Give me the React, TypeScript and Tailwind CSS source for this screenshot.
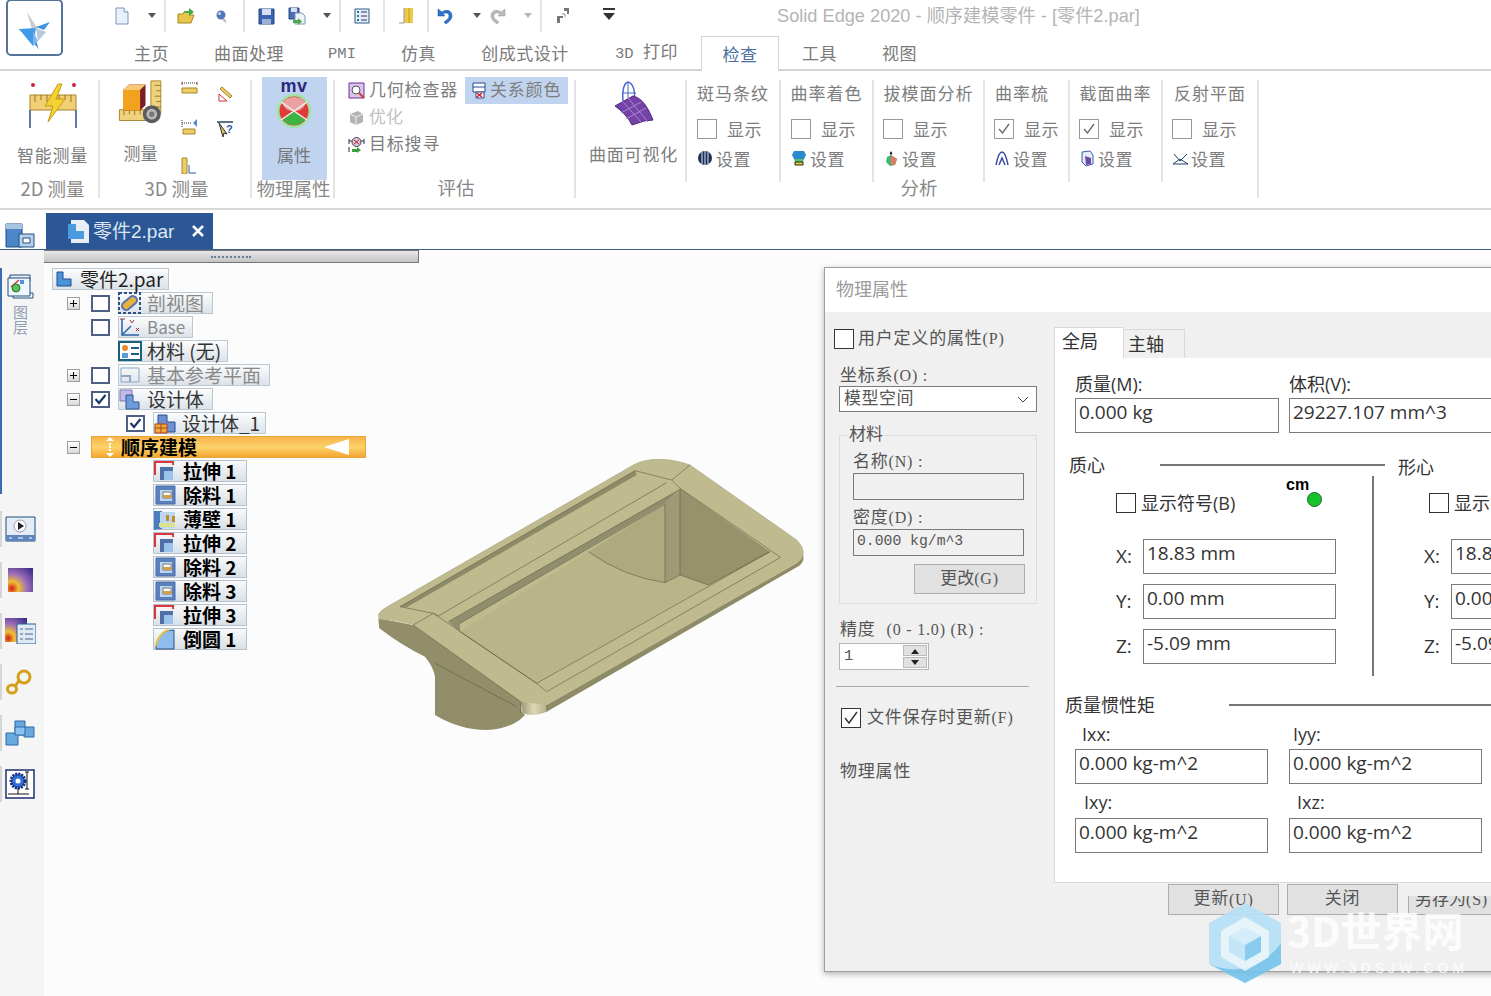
import {FC, ReactNode} from 'react';

const Sep: FC<{className?: string}> = ({className = 'h-[118px] mt-[9px]'}) => (
  <div className={`w-[2px] bg-[#e3e3e3] shrink-0 ${className}`} />
);

const Drop = () => (
  <svg width="10" height="6" viewBox="0 0 10 6" className="shrink-0"><path d="M1 0h8L5 5z" fill="#555" /></svg>
);

// half width latin inside the dialog's cjk labels
const M: FC<{children: ReactNode}> = ({children}) => (
  <span className="font-['Liberation_Serif'] text-[16px] tracking-[0.8px]">{children}</span>
);

// quick access toolbar icons
const NewIcon = () => (
  <svg width="16" height="18" viewBox="0 0 16 18"><path d="M2 1h8l4 4v12H2z" fill="#e8f1fb" stroke="#7c97bd" /><path d="M10 1v4h4" fill="#fff" stroke="#7c97bd" /></svg>
);
const OpenIcon = () => (
  <svg width="18" height="18" viewBox="0 0 18 18"><path d="M1 7h5l1-2h6v3h4l-3 8H1z" fill="#e8c64c" stroke="#a88a20" /><path d="M7 4h5V1l5 4-5 4V6H8z" fill="#45a845" /></svg>
);
const PinIcon = () => (
  <svg width="14" height="14" viewBox="0 0 14 14"><circle cx="7" cy="6" r="4.5" fill="#5577bb" /><circle cx="5.5" cy="4.5" r="1.5" fill="#c8d6f0" /><path d="M9 10l3 3" stroke="#bbb" strokeWidth="2" /></svg>
);
const SaveIcon = () => (
  <svg width="17" height="17" viewBox="0 0 17 17"><path d="M1 1h15v15H1z" fill="#3b63b5" stroke="#24427f" /><path d="M4 1h9v6H4z" fill="#d5e0f2" /><path d="M4 11h9v5H4z" fill="#9bb1d8" /></svg>
);
const SaveAllIcon = () => (
  <svg width="18" height="18" viewBox="0 0 18 18"><path d="M1 1h10v11H1z" fill="#4b6cb0" stroke="#2d4a86" /><path d="M3 1h6v4H3z" fill="#d5e0f2" /><path d="M7 6h7l3 3v8H7z" fill="#eef3fa" stroke="#7c97bd" /><path d="M5 13h5v-2l4 3.500-4 3.500v-2H5z" fill="#4aa84a" /></svg>
);
const ListIcon = () => (
  <svg width="16" height="16" viewBox="0 0 16 16"><path d="M1 1h14v14H1z" fill="#e3eefa" stroke="#2a5a80" /><path d="M3 4h2M3 8h2M3 12h2" stroke="#2a7a8a" strokeWidth="2" /><path d="M7 4h6M7 8h6M7 12h6" stroke="#335" /></svg>
);
const DoorIcon = () => (
  <svg width="18" height="18" viewBox="0 0 18 18"><path d="M7 1h9v15H7z" fill="#eccb4a" /><path d="M7 1v15H2" fill="none" stroke="#999" /><path d="M12 1v15" stroke="#c49c22" /></svg>
);
const UndoIcon = () => (
  <svg width="18" height="18" viewBox="0 0 18 18"><path d="M2 2v7h7L7 7c3-2 6-1 6 2s-3 4-5 6l2 2c4-3 6-5 6-8 0-6-6-7-10-4z" fill="#2f74c9" stroke="#1c4f96" strokeWidth=".5" /></svg>
);
const RedoIcon = () => (
  <svg width="18" height="18" viewBox="0 0 18 18"><path d="M16 2v7H9l2-2C8 5 5 6 5 9s3 4 5 6l-2 2C4 14 2 12 2 9c0-6 6-7 10-4z" fill="#b9b9b9" stroke="#999" strokeWidth=".5" /></svg>
);
const SwapIcon = () => (
  <svg width="16" height="18" viewBox="0 0 16 18"><path d="M9 1h5v6h-2V4h-3zM2 9h6v2H5v5H2z" fill="#777" /><path d="M7 7h3v3" fill="none" stroke="#999" /></svg>
);
const CustomizeIcon = () => (
  <svg width="14" height="14" viewBox="0 0 14 14"><path d="M1 1h12v2H1z" fill="#333" /><path d="M1 6h12l-6 7z" fill="#333" /></svg>
);

const AppLogo = () => (
  <div className="w-[57px] h-[57px] -mt-[1px] ml-[6px] rounded-[5px] border-2 border-[#54749a] bg-white flex items-center justify-center shrink-0">
    <svg width="42" height="42" viewBox="0 0 42 42">
      <path d="M13 5l9 14 6 1-10 3z" fill="#c9ccd2" />
      <path d="M5 22l14 2 6 19-2-3z" fill="#3b8fe0" />
      <path d="M5 22l17-1-3 18z" fill="#3f9aea" />
      <path d="M22 20l14-5-6 8z" fill="#3f94de" />
      <path d="M22 21l10 4-8 9z" fill="#b8c8dc" />
      <path d="M19 24l5 10-5 5z" fill="#7db6ea" />
    </svg>
  </div>
);

const SmartMeasureIcon = () => (
  <svg width="50" height="48" viewBox="0 0 50 48">
    <circle cx="5" cy="3" r="2" fill="#c8283c" /><circle cx="46" cy="3" r="2" fill="#c8283c" />
    <path d="M2 13h46v15H2z" fill="#f1cf74" stroke="#a88526" />
    <path d="M7 13v7M13 13v5M19 13v7M31 13v7M37 13v5M43 13v7" stroke="#8f7426" />
    <path d="M30 2L17 24h8l-5 16 17-23h-9l6-15z" fill="#f4d233" stroke="#c79a17" />
    <path d="M2 28v18M48 28v18" stroke="#2b4d8c" strokeWidth="1.500" />
  </svg>
);
const Measure3DIcon = () => (
  <svg width="50" height="50" viewBox="0 0 50 50">
    <path d="M36 1h11v36H36z" fill="#f0d27e" stroke="#a08028" />
    <path d="M40 6h7M42 12h5M40 18h7M42 24h5M40 30h7" stroke="#8f7426" />
    <path d="M1 33h38v12H1z" fill="#f0d27e" stroke="#a08028" />
    <path d="M6 33v6M12 33v5M18 33v6M24 33v5" stroke="#8f7426" />
    <path d="M5 11l7-6h18v23l-6 6H5z" fill="#7a1f28" />
    <path d="M5 11h19v23H5z" fill="#f2a21e" />
    <path d="M5 11l7-6h18l-6 6z" fill="#f7c977" />
    <circle cx="37" cy="38" r="10" fill="#5c5c5c" /><circle cx="37" cy="38" r="6" fill="#b9b9b9" /><circle cx="37" cy="38" r="3" fill="#777" />
  </svg>
);
const MvIcon = () => (
  <div className="flex flex-col items-center leading-none">
    <span className="font-['Liberation_Sans'] font-bold text-[18px] leading-[14px] text-[#2a2a7a] tracking-[0.5px]">mv</span>
    <svg width="36" height="34" viewBox="0 0 36 34" className="mt-[1px]">
      <circle cx="18" cy="17" r="17" fill="#9ee39e" />
      <circle cx="18" cy="17" r="14.500" fill="#df3b3b" />
      <path d="M6 9c4 8 8 8 12 8s8 0 12-8c-3-4-7-6-12-6S9 5 6 9z" fill="#f0e6e6" opacity=".6" />
      <path d="M18 17L7 26c3 3 7 5 11 5s8-2 11-5z" fill="#3db544" />
      <path d="M5 8l26 18M31 8L5 26" stroke="#f4f0f0" strokeWidth="1.500" />
    </svg>
  </div>
);
const SurfaceIcon = () => (
  <svg width="44" height="46" viewBox="0 0 44 46">
    <path d="M13 28C8 12 12 2 16 1c5 1 8 10 6 18" fill="none" stroke="#4b64cf" strokeWidth="1.500" />
    <path d="M16 1v19M10 12h14" stroke="#4b64cf" />
    <path d="M3 25l18-10c10 2 16 14 20 24l-9 1L20 44C16 36 10 30 3 25z" fill="#7442a8" stroke="#4c2778" />
    <path d="M10 20l20 22M16 17l20 24M9 32l20-11M14 38l20-11" stroke="#ad8ad0" />
  </svg>
);

const SmallIcon: FC<{kind: string}> = ({kind}) => {
  const paths: Record<string, ReactNode> = {
    dist: <><path d="M1 3v3M16 3v3" stroke="#c33" /><path d="M1 4h15" stroke="#333" strokeDasharray="1 1" /><path d="M1 9h15v5H1z" fill="#eccd69" stroke="#a88526" /></>,
    slope: <><path d="M3 15V8l8 7z" fill="none" stroke="#c33" /><path d="M4 3l2-2 10 9-2 2z" fill="#eccd69" stroke="#a88526" /></>,
    minDist: <><path d="M1 2v7M1 5h9" stroke="#333" strokeDasharray="1 1" /><path d="M12 5l4-4v8z" fill="#5588cc" /><path d="M2 11h12v5H2z" fill="#eccd69" stroke="#a88526" /></>,
    query: <><path d="M1 2h16" stroke="#246" strokeWidth="1.500" /><path d="M3 3l8 11-3-1-1 4z" fill="#d8c25a" stroke="#333" /><text x="10" y="13" fontSize="11" fontWeight="700" fill="#2a5aa8" fontFamily="Liberation Sans">?</text></>,
    angle: <><path d="M1 1h5v16H1z" fill="#eccd69" stroke="#a88526" /><path d="M8 8v8h7" fill="none" stroke="#2a5aa8" /></>,
    geom: <><path d="M1 1h15v15H1z" fill="#d9c4e8" stroke="#6a2f9a" /><circle cx="8" cy="8" r="4" fill="#fff" stroke="#556" /><path d="M11 11l5 5" stroke="#c43" strokeWidth="2" /></>,
    rel: <><path d="M2 1h12v9H2z" fill="#fff" stroke="#2a4a90" /><path d="M2 5h12" stroke="#2a4a90" /><path d="M5 10h8v6H5z" fill="#fff" stroke="#2a4a90" /><path d="M6 11l5 4M11 11l-5 4" stroke="#d11" strokeWidth="1.500" /></>,
    opt: <><path d="M2 5l8-3 5 3v8l-7 3-6-3z" fill="#b4b4b4" /><path d="M8 8l7-3M8 8v8M8 8L2 5" stroke="#eee" /></>,
    goal: <><path d="M1 3v5M16 3v5M1 5h3M13 5h3M1 11v5" stroke="#234" /><circle cx="8.500" cy="6" r="4.500" fill="#d7c8dc" stroke="#445" /><path d="M6 4l5 4M11 4l-5 4" stroke="#c22" /><path d="M4 13h5v-2l4 3-4 3v-1H4z" fill="#3ca03c" /></>,
    zebra: <><circle cx="8" cy="8" r="7" fill="#1d2f55" /><path d="M5 2v12M8 1v14M11 2v12" stroke="#dfe6f2" /></>,
    curv: <><path d="M3 1h10l2 4-2 4H3L1 5z" fill="#2a8ad0" /><path d="M3 9h10l-1 3H4z" fill="#5cc070" /><path d="M4 12h8v3H4z" fill="#e6cf3a" stroke="#222" /></>,
    draft: <><path d="M8 2v4" stroke="#222" /><path d="M8 5l6 4-2 6-5 1-4-4 1-5z" fill="#44b86a" /><path d="M8 5l6 4-2 6-4 0z" fill="#e07b6a" /><path d="M8 1l-1.500 3h3z" fill="#222" /></>,
    comb: <><path d="M2 15C4 5 6 2 8 2s4 3 6 13M5 15l3-7 3 7" fill="none" stroke="#3a4ea8" strokeWidth="1.500" /></>,
    section: <><path d="M3 2l8-1 3 4v9l-7 2-4-4z" fill="#e6ecf7" stroke="#3a5aa8" /><path d="M6 6l6 2v6l-5 1z" fill="#6a4aa8" /></>,
    reflect: <><path d="M1 14h15L8 9z" fill="#fff" stroke="#24406e" /><path d="M2 4l6 7 7-7" fill="none" stroke="#24406e" /></>,
  };
  return <svg width="17" height="17" viewBox="0 0 17 17" className="shrink-0">{paths[kind]}</svg>;
};

const Analysis: FC<{title: string; width: string; icon: string; checked?: boolean; pl: string; titleCls?: string}> = ({title, width, icon, checked, pl, titleCls = ''}) => (
  <div className={`${width} h-[104px] flex flex-col items-center`}>
    <div className={`h-[22px] mt-[2px] text-[17px] leading-[22px] whitespace-nowrap tracking-[1px] text-[#7d7d7d] ${titleCls}`}>{title}</div>
    <div className={`w-full ${pl} flex items-center h-[21px] mt-[14px]`}>
      <div className="w-[20px] h-[20px] border border-[#999] bg-white flex items-center justify-center">
        {checked && <svg width="14" height="14" viewBox="0 0 14 14"><path d="M2 7l3.500 4L12 2" fill="none" stroke="#666" strokeWidth="1.300" /></svg>}
      </div>
      <span className="ml-[10px] text-[17px] tracking-[0.5px] text-[#7d7d7d] leading-none pb-[1px] whitespace-nowrap">显示</span>
    </div>
    <div className={`w-full ${pl} flex items-center h-[21px] mt-[9px]`}>
      <SmallIcon kind={icon} />
      <span className="ml-[2px] text-[17px] tracking-[0.5px] text-[#7d7d7d] leading-none pb-[1px] whitespace-nowrap">设置</span>
    </div>
  </div>
);

const GroupLabel: FC<{children: ReactNode}> = ({children}) => (
  <div className="text-[18.500px] leading-[22px] text-[#888] text-center whitespace-nowrap">{children}</div>
);

const Ribbon = () => (
  <div className="h-[139px] border-b-2 border-[#d8d8d8] flex bg-white shrink-0 text-[#7d7d7d]">
    <div className="w-[98px] shrink-0 flex flex-col items-center pl-[7px]">
      <div className="mt-[11px] h-[48px]"><SmartMeasureIcon /></div>
      <div className="mt-[14px] text-[17px] leading-[22px] tracking-[0.8px] whitespace-nowrap">智能测量</div>
      <div className="mt-[11px]"><GroupLabel>2D 测量</GroupLabel></div>
    </div>
    <Sep />
    <div className="w-[150px] shrink-0 flex flex-col">
      <div className="flex h-[93px]">
        <div className="w-[81px] pt-[9px] flex flex-col items-center">
          <Measure3DIcon />
          <div className="mt-[17px] text-[17px] leading-[22px] whitespace-nowrap">测量</div>
        </div>
        <div className="w-[35px] pt-[8px] flex flex-col gap-[22px]"><SmallIcon kind="dist" /><SmallIcon kind="minDist" /><SmallIcon kind="angle" /></div>
        <div className="pt-[15px] flex flex-col gap-[17px]"><SmallIcon kind="slope" /><SmallIcon kind="query" /></div>
      </div>
      <div className="mt-[13px] pl-[3px]"><GroupLabel>3D 测量</GroupLabel></div>
    </div>
    <Sep />
    <div className="w-[81px] shrink-0 flex flex-col items-center relative">
      <div className="mt-[6px] ml-[3px] w-[65px] h-[103px] bg-[#c0d3ef] flex flex-col items-center pt-[2px]">
        <MvIcon />
        <div className="mt-[16px] text-[17px] leading-[22px] text-[#777]">属性</div>
      </div>
      <div className="absolute top-[106px] left-[1px] w-full"><GroupLabel>物理属性</GroupLabel></div>
    </div>
    <Sep />
    <div className="w-[239px] shrink-0 flex flex-col">
      <div className="h-[93px] pl-[13px]">
        <div className="flex items-center h-[27px] mt-[6px]">
          <SmallIcon kind="geom" />
          <span className="ml-[4px] text-[17px] tracking-[0.8px] whitespace-nowrap leading-none pb-[4px]">几何检查器</span>
          <div className="ml-[7px] h-[27px] w-[103px] bg-[#c0d3ef] flex items-center pl-[6px]">
            <SmallIcon kind="rel" />
            <span className="ml-[2px] text-[17px] tracking-[0.8px] whitespace-nowrap leading-none pb-[4px]">关系颜色</span>
          </div>
        </div>
        <div className="flex items-center h-[27px] text-[#c2c2c2]">
          <SmallIcon kind="opt" />
          <span className="ml-[4px] text-[17px] leading-none pb-[4px]">优化</span>
        </div>
        <div className="flex items-center h-[27px]">
          <SmallIcon kind="goal" />
          <span className="ml-[4px] text-[17px] tracking-[0.8px] leading-none pb-[4px]">目标搜寻</span>
        </div>
      </div>
      <div className="mt-[12px] pl-[3px]"><GroupLabel>评估</GroupLabel></div>
    </div>
    <Sep />
    <div className="shrink-0 flex flex-col relative">
      <div className="flex mt-[9px]">
        <div className="w-[109px] flex flex-col items-center pt-[1px] pl-[6px]">
          <SurfaceIcon />
          <div className="mt-[16px] text-[17px] leading-[22px] tracking-[0.8px] whitespace-nowrap">曲面可视化</div>
        </div>
        <Sep className="h-[102px]" />
        <Analysis title="斑马条纹" width="w-[92px]" icon="zebra" pl="pl-[10px]" />
        <Sep className="h-[102px]" />
        <Analysis title="曲率着色" width="w-[91px]" icon="curv" pl="pl-[10px]" />
        <Sep className="h-[102px]" />
        <Analysis title="拔模面分析" width="w-[109px]" icon="draft" pl="pl-[9px]" />
        <Sep className="h-[102px]" />
        <Analysis title="曲率梳" width="w-[83px]" icon="comb" checked pl="pl-[9px]" titleCls="pr-[9px]" />
        <Sep className="h-[102px]" />
        <Analysis title="截面曲率" width="w-[91px]" icon="section" checked pl="pl-[9px]" />
        <Sep className="h-[102px]" />
        <Analysis title="反射平面" width="w-[94px]" icon="reflect" pl="pl-[9px]" />
      </div>
      <div className="absolute top-[105px] left-[343px] w-[0px] flex justify-center"><GroupLabel>分析</GroupLabel></div>
    </div>
    <Sep />
  </div>
);

// tree icons
const Extrude = () => (
  <svg width="22" height="22" viewBox="0 0 22 22"><path d="M1 15V2h18v3" fill="none" stroke="#d8383c" strokeWidth="2" /><path d="M6 7h13v13H6z" fill="#4f6fa8" /><path d="M10 11h9v9h-9z" fill="#9cc3ea" /></svg>
);
const Cut = () => (
  <svg width="22" height="22" viewBox="0 0 22 22"><path d="M2 2h19v18H2z" fill="#5b80bb" stroke="#4a6ca4" /><path d="M6 6h12v11H6z" fill="#b9d5f2" /><path d="M9 8h8v6H9z" fill="#fff" stroke="#777" /><path d="M9 11h8v3H9z" fill="#d4a23a" /></svg>
);
const Thin = () => (
  <svg width="22" height="22" viewBox="0 0 22 22"><path d="M0 3h8v18l-8 1z" fill="#4a7ec0" /><path d="M6 4h15v16H6z" fill="#bcd6ec" /><path d="M5 15h16v4H5z" fill="#d9e38a" /><path d="M12 7h3v6h-3zM18 8h3v6h-3z" fill="#c08a2e" /></svg>
);
const Round = () => (
  <svg width="22" height="22" viewBox="0 0 22 22"><path d="M2 21C2 10 8 2 20 2v19z" fill="#8fbcec" stroke="#2a4f8a" /><path d="M2 18C3 10 9 3 15 2" fill="none" stroke="#e3c34a" strokeWidth="2" /></svg>
);
const ParIcon = () => (
  <svg width="18" height="18" viewBox="0 0 18 18"><path d="M2 2h6v7h8v7H2z" fill="#4a94dc" stroke="#204f8a" /></svg>
);
const SectionIcon = () => (
  <svg width="24" height="22" viewBox="0 0 24 22"><rect x="1" y="1" width="21" height="20" fill="none" stroke="#2c4d86" strokeWidth="2" strokeDasharray="3 2" /><rect x="3" y="7" width="17" height="8" rx="4" transform="rotate(-40 11.500 11)" fill="#e8b23e" stroke="#5574a8" strokeWidth="2" /></svg>
);
const BaseIcon = () => (
  <svg width="22" height="22" viewBox="0 0 22 22"><path d="M3 3v16h17" fill="none" stroke="#2b62a8" strokeWidth="1.500" /><path d="M3 19l9-9" stroke="#2b62a8" strokeWidth="1.500" /><path d="M1 3h5M11 4l2 3 2-3M17 12l3 3M20 12l-3 3" stroke="#a8323c" fill="none" /></svg>
);
const MatIcon = () => (
  <svg width="24" height="20" viewBox="0 0 24 20"><path d="M1 1h22v18H1z" fill="#fff" stroke="#17607e" strokeWidth="2" /><circle cx="7" cy="7" r="3" fill="#e88a2e" /><path d="M4 12h6v5H4z" fill="#5a9ad6" /><path d="M13 7h8M13 13h8" stroke="#17607e" strokeWidth="2" /></svg>
);
const PlaneIcon = () => (
  <svg width="24" height="20" viewBox="0 0 24 20"><path d="M3 3h18v14H3z" fill="none" stroke="#8ba6c6" /><path d="M3 11h9v6" fill="none" stroke="#8ba6c6" strokeWidth="2" /></svg>
);
const BodyIcon = () => (
  <svg width="22" height="22" viewBox="0 0 22 22"><path d="M1 2h12v11H1z" fill="#c3bce8" stroke="#8073b8" /><path d="M7 7h7v7h6v7H7z" fill="#6e9bdc" stroke="#31578f" /></svg>
);
const Body1Icon = () => (
  <svg width="22" height="22" viewBox="0 0 22 22"><path d="M4 3h9v7h8v10H4z" fill="#6e8fd2" stroke="#274f92" /><path d="M1 12h12v9H1z" fill="#e8b038" stroke="#b43c20" /><path d="M7 12v9M1 16h12" stroke="#b43c20" /></svg>
);

const Exp: FC<{sign?: '+' | '-'}> = ({sign}) => (
  <div className="w-[13px] h-[13px] shrink-0">
    {sign && (
      <div className="w-[13px] h-[13px] border border-[#9aa0a6] bg-gradient-to-b from-white to-[#d8d8d8] relative">
        <div className="absolute left-[2px] top-[5px] w-[7px] h-px bg-black" />
        {sign === '+' && <div className="absolute left-[5px] top-[2px] w-px h-[7px] bg-black" />}
      </div>
    )}
  </div>
);

const TreeCheck: FC<{checked?: boolean}> = ({checked}) => (
  <div className="w-[19px] h-[17px] border-2 border-[#4e5f85] bg-white shrink-0 flex items-center justify-center">
    {checked && <svg width="13" height="11" viewBox="0 0 13 11"><path d="M1.500 5l3.500 4 6.500-8" fill="none" stroke="#1e3a68" strokeWidth="2.200" /></svg>}
  </div>
);

const Chip: FC<{icon: ReactNode; text: string; cls: string; gap?: string}> = ({icon, text, cls, gap = 'ml-[5px]'}) => (
  <div className={`h-[22px] flex items-center border border-[#bcc8d2] bg-gradient-to-b from-[#fbfcfd] to-[#dce3e9] overflow-visible ${cls}`}>
    <div className="w-[24px] flex items-center justify-center -ml-px shrink-0">{icon}</div>
    <span className={`${gap} whitespace-nowrap leading-none pb-[2px]`}>{text}</span>
  </div>
);

const features: [ReactNode, string][] = [
  [<Extrude />, '拉伸 1'],
  [<Cut />, '除料 1'],
  [<Thin />, '薄壁 1'],
  [<Extrude />, '拉伸 2'],
  [<Cut />, '除料 2'],
  [<Cut />, '除料 3'],
  [<Extrude />, '拉伸 3'],
  [<Round />, '倒圆 1'],
];

const Tree = () => (
  <div className="pt-[4px] pl-[8px] text-[19px]">
    <div className="h-6 flex items-center">
      <Chip icon={<ParIcon />} text="零件2.par" cls="text-[#222] pr-[5px]" gap="ml-[4px]" />
    </div>
    <div className="h-6 flex items-center pl-[15px]">
      <Exp sign="+" /><div className="w-[11px]" /><TreeCheck /><div className="w-[8px]" />
      <Chip icon={<SectionIcon />} text="剖视图" cls="text-[#8a8a8a] pr-[8px]" />
    </div>
    <div className="h-6 flex items-center pl-[15px]">
      <Exp /><div className="w-[11px]" /><TreeCheck /><div className="w-[8px]" />
      <Chip icon={<BaseIcon />} text="Base" cls="text-[#8a8a8a] text-[17px] pr-[7px]" />
    </div>
    <div className="h-6 flex items-center pl-[66px]">
      <Chip icon={<MatIcon />} text="材料 (无)" cls="text-[#333] pr-[6px]" />
    </div>
    <div className="h-6 flex items-center pl-[15px]">
      <Exp sign="+" /><div className="w-[11px]" /><TreeCheck /><div className="w-[8px]" />
      <Chip icon={<PlaneIcon />} text="基本参考平面" cls="text-[#8a8a8a] pr-[8px]" />
    </div>
    <div className="h-6 flex items-center pl-[15px]">
      <Exp sign="-" /><div className="w-[11px]" /><TreeCheck checked /><div className="w-[8px]" />
      <Chip icon={<BodyIcon />} text="设计体" cls="text-[#333] pr-[8px]" />
    </div>
    <div className="h-6 flex items-center pl-[74px]">
      <TreeCheck checked /><div className="w-[8px]" />
      <Chip icon={<Body1Icon />} text="设计体_1" cls="text-[#333] pr-[5px]" />
    </div>
    <div className="h-6 flex items-center pl-[15px]">
      <Exp sign="-" /><div className="w-[11px]" />
      <div className="w-[275px] h-[22px] flex items-center border border-[#e8a53a] bg-gradient-to-b from-[#f8b44a] via-[#fbd36a] to-[#f4a52e] relative">
        <svg width="10" height="20" viewBox="0 0 10 20" className="ml-[13px] shrink-0"><path d="M5 0l4 4H1zM5 20l4-4H1z" fill="#fff" /><path d="M5 6v8" stroke="#fff" strokeWidth="2" strokeDasharray="2 1" /></svg>
        <span className="ml-[6px] font-bold text-black leading-none pb-[2px]">顺序建模</span>
        <svg width="26" height="16" viewBox="0 0 26 16" className="absolute right-[15px] top-[2px]"><path d="M0 8L25 0v16z" fill="#fff" /></svg>
      </div>
    </div>
    {features.map(([icon, text]) => (
      <div key={text} className="h-6 flex items-center pl-[101px]">
        <div className="w-[94px] h-[22px] flex items-center border border-[#b4c0cc] bg-gradient-to-b from-[#f8f9fa] to-[#d9e0e6]">
          <div className="w-[24px] shrink-0">{icon}</div>
          <span className="ml-[5px] font-bold text-black whitespace-nowrap leading-none pb-[2px]">{text}</span>
        </div>
      </div>
    ))}
  </div>
);

const RailTab: FC<{children: ReactNode}> = ({children}) => (
  <div className="h-[51px] flex items-center relative">
    <div className="w-[2px] h-[36px] bg-[#d6d6d6]" />
    <div className="ml-[3px]">{children}</div>
  </div>
);

const Rail = () => (
  <div className="w-[44px] shrink-0 bg-[#f5f5f5] flex flex-col relative">
    <div className="mt-[18px] h-[226px] w-[2px] bg-[#3b6bb0]" />
    <div className="absolute top-[24px] left-[6px] flex flex-col items-center w-[28px]">
      <svg width="28" height="25" viewBox="0 0 28 25"><path d="M4 1h20v6H4z" fill="#e8edf4" stroke="#1d4f7a" /><path d="M7 19h20v5H7z" fill="#fff" stroke="#1d4f7a" /><path d="M2 4h22v18H2z" fill="#f0f6fc" stroke="#1d4f7a" /><path d="M5 13l8-7" stroke="#d03b3b" strokeWidth="1.500" /><circle cx="10" cy="14" r="4" fill="#5bc05b" stroke="#1b7a2b" /><path d="M14 6h4v4h-4z" fill="#4a94dc" /></svg>
      <div className="mt-[6px] [writing-mode:vertical-lr] text-[15px] leading-[16px] text-[#8fa0b4]">图层</div>
    </div>
    <div className="mt-[9px] flex flex-col">
      <RailTab>
        <svg width="31" height="26" viewBox="0 0 31 26"><path d="M1 1h29v24H1z" fill="#e4edf6" stroke="#1d4f7a" /><path d="M1 19h29v6H1z" fill="#5c86bc" /><circle cx="15" cy="10" r="6" fill="#fff" stroke="#99a" /><path d="M13 6l6 4-6 4z" fill="#222" /><path d="M4 22h3M13 22h5M24 22h3" stroke="#fff" /></svg>
      </RailTab>
      <RailTab>
        <svg width="25" height="24" viewBox="0 0 25 24" className="ml-[3px]"><defs><radialGradient id="heat" cx="15%" cy="85%" r="110%"><stop offset="0" stopColor="#d41b1b" /><stop offset=".25" stopColor="#f0c030" /><stop offset=".55" stopColor="#a070b8" /><stop offset="1" stopColor="#3e2e8c" /></radialGradient></defs><path d="M0 0h25v24H0z" fill="url(#heat)" /></svg>
      </RailTab>
      <RailTab>
        <svg width="31" height="26" viewBox="0 0 31 26"><path d="M0 0h22v24H0z" fill="url(#heat)" /><path d="M12 6h19v20H12z" fill="#dfeaf6" stroke="#27608e" /><path d="M15 11h3M20 11h8M15 16h3M20 16h8M15 21h3M20 21h8" stroke="#4a6484" /></svg>
      </RailTab>
      <RailTab>
        <svg width="28" height="28" viewBox="0 0 28 28"><ellipse cx="19" cy="9" rx="6" ry="6" fill="none" stroke="#d4a018" strokeWidth="3" /><ellipse cx="7" cy="21" rx="4.500" ry="4" fill="none" stroke="#d4a018" strokeWidth="3" /><path d="M14 13l-4 5" stroke="#d4a018" strokeWidth="3" /></svg>
      </RailTab>
      <RailTab>
        <svg width="30" height="26" viewBox="0 0 30 26"><path d="M10 1h10v6h9v10H19v-2h-6v10H1V13h9z" fill="#6aa8e0" stroke="#2a6aa8" /><path d="M10 7h10v8H10z" fill="#8cc0ee" stroke="#2a6aa8" /></svg>
      </RailTab>
      <RailTab>
        <svg width="30" height="30" viewBox="0 0 30 30"><path d="M1 1h28v28H1z" fill="#fff" stroke="#1d2f72" strokeWidth="1.500" /><circle cx="13" cy="12" r="7" fill="#3272d8" stroke="#14307e" strokeWidth="3" strokeDasharray="2 1" /><circle cx="13" cy="12" r="2.500" fill="#fff" /><path d="M13 19v6M3 25h21M22 3v17M20 3h4M20 20h4" stroke="#111" /></svg>
      </RailTab>
    </div>
  </div>
);

const Model = () => (
  <svg width="450" height="290" viewBox="0 0 1350 870" className="absolute left-[326px] top-[200px]">
    <defs>
      <linearGradient id="corner" x1="0" x2="1"><stop offset="0" stopColor="#9b9774" /><stop offset=".5" stopColor="#ddd9b8" /><stop offset="1" stopColor="#b5b18c" /></linearGradient>
    </defs>
    <path d="M195 640L195 795Q270 840 350 840Q430 835 465 795L440 770Z" fill="#908d68" />
    <path d="M25 505L28 535Q100 590 165 620Q190 650 195 680L440 790L455 790L452 752L130 525Z" fill="#918e69" />
    <path d="M25 495Q30 480 70 460L790 45Q820 28 870 28Q920 30 960 45L1280 270Q1300 290 1300 310Q1295 330 1280 340L530 765Q525 770 452 755L130 525Q80 512 25 508Z" fill="#bfbb8e" />
    <path d="M1300 310L1300 330Q1295 345 1280 352L530 785L530 765L1280 340Q1295 330 1300 310Z" fill="#8e8b67" />
    <path d="M452 755L530 765L530 785Q490 802 458 790Z" fill="url(#corner)" />
    <path d="M270 545L655 305Q760 380 885 398L930 375L1015 405L500 700Z" fill="#b9b588" />
    <path d="M655 305L885 162L885 398Q760 380 655 305Z" fill="#aeaa80" />
    <path d="M885 160L930 120L930 375L885 398Z" fill="#9e9a77" />
    <path d="M930 115L1200 305L1015 405L930 375Z" fill="#96926c" />
    <path d="M235 515L930 118L885 160L270 520L270 545Z" fill="#918e6d" />
    <path d="M90 470L795 62L800 75L110 472Z" fill="#8d8a67" />
    <g fill="none" stroke="#5f5d44" strokeWidth="1.800">
      <path d="M25 495Q30 480 70 460L790 45Q820 28 870 28Q920 30 960 45L1280 270Q1300 290 1300 310" stroke="#a5a27e" />
      <path d="M90 470L795 62L905 90L930 115L1232 322L530 725L500 700L270 545" />
      <path d="M90 470Q140 480 190 490L500 700" />
      <path d="M130 525L190 490L205 498L890 98" />
      <path d="M905 90L960 45" />
      <path d="M235 515L930 118" />
      <path d="M270 520L885 162L885 398Q760 380 655 305" />
      <path d="M930 120L930 375L885 398M930 375L1015 405L1200 305" />
      <path d="M500 700L1200 305" />
      <path d="M195 640L440 770" />
      <path d="M452 755L130 525M452 755L452 790M530 765L530 785" />
    </g>
  </svg>
);

const Check: FC<{checked?: boolean; className?: string}> = ({checked, className = ''}) => (
  <div className={`w-[20px] h-[20px] border border-[#333] bg-white shrink-0 flex items-center justify-center ${className}`}>
    {checked && <svg width="16" height="16" viewBox="0 0 16 16"><path d="M2 8l4 5 8-11" fill="none" stroke="#333" strokeWidth="1.400" /></svg>}
  </div>
);

const WinButton: FC<{children: ReactNode; className?: string}> = ({children, className = ''}) => (
  <div className={`bg-[#e1e1e1] border border-[#adadad] flex items-center justify-center text-[#555] text-[17px] leading-none ${className}`}>
    {children}
  </div>
);

const ValueBox: FC<{value: string; width: string}> = ({value, width}) => (
  <div className={`${width} h-[35px] shrink-0 border border-[#7a7a7a] bg-white pl-[3px] text-[19px] leading-[27px] text-[#333] whitespace-nowrap overflow-hidden`}>
    {value}
  </div>
);

const Coord: FC<{axis: string; value: string; width: string}> = ({axis, value, width}) => (
  <div className="flex items-center h-[35px]">
    <span className="w-[27px] text-[19px] text-[#333]">{axis}</span>
    <ValueBox value={value} width={width} />
  </div>
);

const mono = "font-['Liberation_Mono','Noto_Sans_CJK_SC',monospace]";

const DialogLeft = () => (
  <div className={`w-[229px] shrink-0 pl-[9px] text-[#555] text-[17px] ${mono}`}>
    <div className="flex items-center mt-[17px] h-[20px]">
      <Check />
      <span className="ml-[4px] leading-none whitespace-nowrap tracking-[0.8px]">用户定义的属性<M>(P)</M></span>
    </div>
    <div className="ml-[6px] mt-[16px] h-[21px] leading-[22px] whitespace-nowrap tracking-[0.8px]">坐标系<M>(O) :</M></div>
    <div className="ml-[5px] w-[198px] h-[26px] border border-[#7a7a7a] bg-white flex items-center justify-between pl-[4px] pr-[7px]">
      <span className="leading-none tracking-[0.5px]">模型空间</span>
      <svg width="12" height="7" viewBox="0 0 12 7"><path d="M1 1l5 5 5-5" fill="none" stroke="#444" /></svg>
    </div>
    <div className="ml-[5px] mt-[23px] w-[198px] h-[169px] border border-[#dcdcdc] relative px-[13px]">
      <div className="absolute -top-[11px] left-[8px] bg-[#f0f0f0] px-px leading-[22px]">材料</div>
      <div className="mt-[15px] h-[22px] leading-[22px] whitespace-nowrap tracking-[0.8px]">名称<M>(N) :</M></div>
      <div className="h-[27px] w-[171px] border border-[#7a7a7a] bg-[#f0f0f0]" />
      <div className="mt-[7px] h-[22px] leading-[22px] whitespace-nowrap tracking-[0.8px]">密度<M>(D) :</M></div>
      <div className="h-[27px] w-[171px] border border-[#7a7a7a] bg-[#f0f0f0] pl-[3px] text-[14.750px] leading-[23px] whitespace-nowrap">0.000 kg/m^3</div>
      <WinButton className="mt-[8px] ml-[61px] w-[111px] h-[30px] whitespace-nowrap">更改<M>(G)</M></WinButton>
    </div>
    <div className="ml-[6px] mt-[15px] h-[22px] leading-[22px] whitespace-nowrap tracking-[0.8px]">精度 <M>(0 - 1.0) (R) :</M></div>
    <div className="ml-[5px] mt-[2px] w-[90px] h-[27px] border border-[#b5b5b5] bg-white flex items-center justify-between pl-[4px] pr-px">
      <span className="leading-none text-[15.500px]">1</span>
      <div className="flex flex-col gap-px">
        <div className="w-[24px] h-[11px] bg-[#e1e1e1] border border-[#bbb] flex items-center justify-center"><svg width="10" height="6" viewBox="0 0 10 6"><path d="M1 6h8L5 1z" fill="#222" /></svg></div>
        <div className="w-[24px] h-[11px] bg-[#e1e1e1] border border-[#bbb] flex items-center justify-center"><svg width="10" height="6" viewBox="0 0 10 6"><path d="M1 0h8L5 5z" fill="#222" /></svg></div>
      </div>
    </div>
    <div className="mt-[16px] -ml-[7px] w-[193px] h-px bg-[#a8a8a8] relative left-[9px]" />
    <div className="flex items-center mt-[21px] ml-[7px] h-[20px]">
      <Check checked />
      <span className="ml-[6px] leading-none whitespace-nowrap tracking-[0.8px]">文件保存时更新<M>(F)</M></span>
    </div>
    <div className="ml-[6px] mt-[34px] h-[22px] leading-[22px] tracking-[0.8px]">物理属性</div>
  </div>
);

const DialogRight = () => (
  <div className="flex-1 mt-[15px] text-[#333] font-['Open_Sans','Noto_Sans_CJK_SC',sans-serif]">
    <div className="flex items-end h-[31px] text-[18px]">
      <div className="w-[69px] h-[31px] bg-white border-t border-l border-[#d9d9d9] pl-[7px] leading-[26px]">全局</div>
      <div className="w-[62px] h-[29px] bg-[#f0f0f0] border border-b-0 border-[#d9d9d9] pl-[4px] leading-[28px]">主轴</div>
    </div>
    <div className="h-[525px] bg-white border-l border-b border-[#d9d9d9] w-[660px] text-[18px]">
      <div className="flex pl-[20px] pt-[15px] gap-[10px]">
        <div className="w-[204px]">
          <div className="h-[25px] leading-[22px] whitespace-nowrap">质量(M):</div>
          <ValueBox value="0.000 kg" width="w-[204px]" />
        </div>
        <div className="w-[240px]">
          <div className="h-[25px] leading-[22px] whitespace-nowrap">体积(V):</div>
          <ValueBox value="29227.107 mm^3" width="w-[240px]" />
        </div>
      </div>
      <div className="flex items-center mt-[21px] h-[22px] pl-[14px]">
        <span className="w-[91px] leading-none">质心</span>
        <div className="w-[225px] h-[2px] bg-[#777]" />
        <span className="ml-[13px] leading-none mt-[4px]">形心</span>
      </div>
      <div className="flex">
        <div className="w-[317px] pl-[61px]">
          <div className="flex items-center mt-[15px] h-[24px] relative">
            <Check />
            <span className="ml-[5px] leading-none whitespace-nowrap">显示符号(B)</span>
            <span className="absolute left-[170px] -top-[14px] font-['Liberation_Sans'] font-bold text-[16px] leading-none text-black">cm</span>
            <div className="absolute left-[191px] top-[1px] w-[15px] h-[15px] rounded-full bg-[#17c22a] border border-[#1a6a2a]" />
          </div>
          <div className="mt-[24px] flex flex-col gap-[10px]">
            <Coord axis="X:" value="18.83 mm" width="w-[193px]" />
            <Coord axis="Y:" value="0.00 mm" width="w-[193px]" />
            <Coord axis="Z:" value="-5.09 mm" width="w-[193px]" />
          </div>
        </div>
        <div className="w-[2px] h-[200px] bg-[#777]" />
        <div className="pl-[50px]">
          <div className="flex items-center mt-[15px] h-[24px] pl-[5px]">
            <Check />
            <span className="ml-[5px] leading-none whitespace-nowrap">显示符号(B)</span>
          </div>
          <div className="mt-[24px] flex flex-col gap-[10px]">
            <Coord axis="X:" value="18.83 mm" width="w-[193px]" />
            <Coord axis="Y:" value="0.00 mm" width="w-[193px]" />
            <Coord axis="Z:" value="-5.09 mm" width="w-[193px]" />
          </div>
        </div>
      </div>
      <div className="flex items-center mt-[18px] h-[22px] pl-[10px]">
        <span className="w-[164px] leading-none">质量惯性矩</span>
        <div className="w-[300px] h-[2px] bg-[#777]" />
      </div>
      <div className="grid grid-cols-[214px_214px] pl-[20px]">
        <div>
          <div className="h-[33px] pl-[7px] pt-[6px] leading-[24px]">Ixx:</div>
          <ValueBox value="0.000 kg-m^2" width="w-[193px]" />
        </div>
        <div>
          <div className="h-[33px] pl-[4px] pt-[6px] leading-[24px]">Iyy:</div>
          <ValueBox value="0.000 kg-m^2" width="w-[193px]" />
        </div>
        <div>
          <div className="h-[34px] pl-[9px] pt-[6px] leading-[24px]">Ixy:</div>
          <ValueBox value="0.000 kg-m^2" width="w-[193px]" />
        </div>
        <div>
          <div className="h-[34px] pl-[8px] pt-[6px] leading-[24px]">Ixz:</div>
          <ValueBox value="0.000 kg-m^2" width="w-[193px]" />
        </div>
      </div>
    </div>
    <div className={`flex mt-[1px] text-[17px] ${mono}`}>
      <WinButton className="ml-[114px] w-[111px] h-[31px] tracking-[0.8px]">更新<M>(U)</M></WinButton>
      <WinButton className="ml-[8px] w-[111px] h-[31px] tracking-[0.8px]">关闭</WinButton>
      <div className="ml-[10px] mt-[12px] w-[111px] h-[19px] overflow-hidden bg-[#e1e1e1] border border-t-0 border-[#adadad] text-[#555] text-left pl-[6px] leading-[8px] whitespace-nowrap">另存为<M>(S)</M></div>
    </div>
  </div>
);

const Dialog = () => (
  <div className="absolute left-[780px] top-[17px] w-[720px] h-[705px] bg-[#f0f0f0] border border-[#a0a0a0] shadow-[0_2px_6px_rgba(0,0,0,0.3)]">
    <div className="h-[44px] bg-white pl-[11px] text-[18px] leading-[41px] text-[#9a9a9a]">物理属性</div>
    <div className="flex">
      <DialogLeft />
      <DialogRight />
    </div>
  </div>
);

const Watermark = () => (
  <div className="absolute left-[1209px] top-[903px] flex pointer-events-none">
    <svg width="72" height="80" viewBox="0 0 72 80" className="opacity-90">
      <path d="M36 0L72 20V61L36 80L0 61V20Z" fill="#b5e0f6" />
      <path d="M0 61C20 70 50 70 72 40V61L36 80Z" fill="#74c3ec" />
      <path d="M36 14L60 28V54L36 68L12 54V28Z" fill="#eef8fd" opacity=".85" />
      <path d="M36 24L52 33L36 42L20 33Z" fill="#d3edfa" />
      <path d="M20 33L36 42V58L20 49Z" fill="#bfe4f6" />
      <path d="M52 33L36 42V58L52 49Z" fill="#7fc9ee" />
    </svg>
    <div className="ml-[6px] mt-[2px] text-white/80 font-bold">
      <div className="text-[41px] leading-[48px] whitespace-nowrap">3D世界网</div>
      <div className="mt-[8px] ml-[3px] text-[14px] leading-none tracking-[4px] font-['Liberation_Sans'] font-normal whitespace-nowrap">WWW.3DSJW.COM</div>
    </div>
  </div>
);

const tabs: [string, string][] = [
  ['主页', 'w-[83px]'],
  ['曲面处理', 'w-[112px]'],
  ['PMI', 'w-[74px]'],
  ['仿真', 'w-[79px]'],
  ['创成式设计', 'w-[134px]'],
  ['3D 打印', 'w-[109px]'],
  ['检查', 'w-[78px]'],
  ['工具', 'w-[81px]'],
  ['视图', 'w-[79px]'],
];

const App: FC = () => {
  return (
    <div className="w-[1491px] h-[996px] relative overflow-hidden bg-white flex flex-col font-['Noto_Sans_CJK_SC','Liberation_Sans',sans-serif]">
      <div className="h-[36px] flex shrink-0 relative">
        <div className="absolute left-0 top-0"><AppLogo /></div>
        <div className="ml-[112px] h-[32px] flex items-center shrink-0">
          <div className="w-[20px] flex justify-center"><NewIcon /></div>
          <div className="ml-[15px]"><Drop /></div>
          <Sep className="h-[32px] ml-[7px]" />
          <div className="w-[40px] flex justify-center"><OpenIcon /></div>
          <div className="w-[30px] flex justify-center"><PinIcon /></div>
          <Sep className="h-[32px] ml-[7px]" />
          <div className="w-[42px] flex justify-center"><SaveIcon /></div>
          <div className="w-[20px] flex justify-center"><SaveAllIcon /></div>
          <div className="ml-[15px]"><Drop /></div>
          <Sep className="h-[32px] ml-[7px]" />
          <div className="w-[42px] flex justify-center"><ListIcon /></div>
          <Sep className="h-[32px]" />
          <div className="w-[42px] flex justify-center"><DoorIcon /></div>
          <Sep className="h-[32px]" />
          <div className="w-[32px] flex justify-center"><UndoIcon /></div>
          <div className="ml-[11px]"><Drop /></div>
          <div className="w-[32px] flex justify-center"><RedoIcon /></div>
          <div className="ml-[9px] opacity-40"><Drop /></div>
          <Sep className="h-[32px] ml-[7px]" />
          <div className="w-[42px] flex justify-center"><SwapIcon /></div>
          <div className="ml-[18px] -mt-[4px]"><CustomizeIcon /></div>
        </div>
        <div className="ml-[161px] mt-[3px] text-[18.200px] leading-[26px] text-[#b4b4b4] whitespace-nowrap font-['Liberation_Sans','Noto_Sans_CJK_SC',sans-serif]">
          Solid Edge 2020 - 顺序建模零件 - [零件2.par]
        </div>
      </div>
      <div className="h-[35px] shrink-0 border-b-2 border-[#d4d4d4] flex pl-[110px] text-[17px] tracking-[0.5px] text-[#7a7a7a]">
        {tabs.map(([name, width]) =>
          name === '检查' ? (
            <div key={name} className={`${width} h-[35px] bg-white border border-b-0 border-[#d4d4d4] text-center leading-[34px] text-[#4a6f9f]`}>{name}</div>
          ) : name === 'PMI' ? (
            <div key={name} className={`${width} text-center leading-[36px] whitespace-nowrap text-[15.500px] tracking-normal ${mono}`}>{name}</div>
          ) : name === '3D 打印' ? (
            <div key={name} className={`${width} text-center leading-[35px] whitespace-nowrap ${mono}`}><span className="text-[15.500px] tracking-normal">3D </span>打印</div>
          ) : (
            <div key={name} className={`${width} text-center leading-[34px] whitespace-nowrap`}>{name}</div>
          ),
        )}
      </div>
      <Ribbon />
      <div className="h-[40px] shrink-0 flex border-b border-[#3b5f8f]">
        <div className="w-[46px] pl-[5px] pt-[13px] shrink-0">
          <svg width="30" height="25" viewBox="0 0 30 25"><path d="M1 1h16v23H1z" fill="#4a86c8" stroke="#1f4e82" /><path d="M1 1h16v5H1z" fill="#a7c4e4" /><path d="M14 11h15v13H14z" fill="#b9d0ea" stroke="#1f4e82" /><path d="M18 15h7v5h-7z" fill="#fff" stroke="#1f4e82" /></svg>
        </div>
        <div className="mt-[3px] w-[167px] h-[36px] bg-[#2b5797] flex items-center pl-[21px] text-[#dde6f2] text-[19px] shrink-0">
          <svg width="23" height="25" viewBox="0 0 23 25" className="shrink-0"><path d="M4 1h13l5 5v18H4z" fill="#e8eef6" /><path d="M1 5h8v7h8v8H1z" fill="#4a9ae0" /></svg>
          <span className="w-[78px] ml-[3px] leading-none whitespace-nowrap font-['Liberation_Sans','Noto_Sans_CJK_SC',sans-serif]">零件2.par</span>
          <svg width="14" height="14" viewBox="0 0 14 14" className="ml-[20px] shrink-0"><path d="M2 2l10 10M12 2L2 12" stroke="#fff" strokeWidth="2.500" /></svg>
        </div>
      </div>
      <div className="flex-1 flex bg-[#fcfcfc] relative">
        <Rail />
        <div className="flex-1 relative">
          <div className="w-[375px] h-[13px] border-y border-r border-[#777] bg-gradient-to-b from-[#e8e8e8] to-[#c4c4c4] flex items-center justify-center">
            <div className="w-[40px] border-t-2 border-dotted border-[#6a7f9a]" />
          </div>
          <Tree />
          <Model />
          <Dialog />
        </div>
      </div>
      <Watermark />
    </div>
  );
};

export default App;
